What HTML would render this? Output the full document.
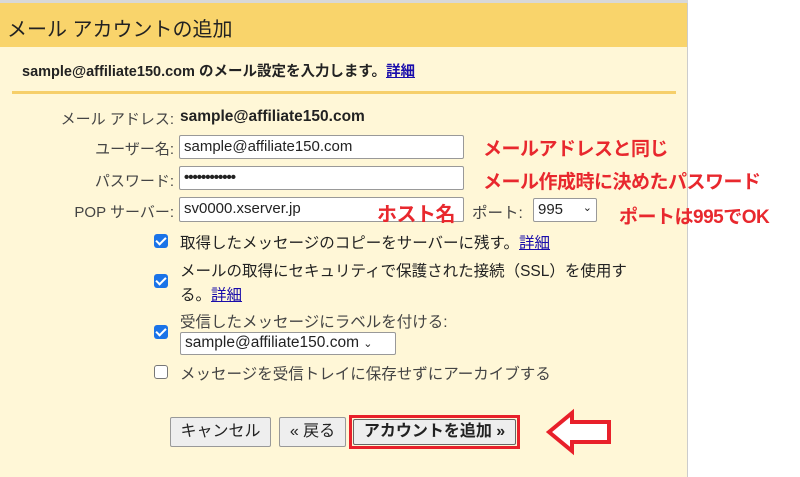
<!DOCTYPE html>
<html><head><meta charset="utf-8"><style>
body{margin:0;width:800px;height:477px;background:#fff;font-family:"Liberation Sans","Noto Sans CJK JP",sans-serif;position:relative;overflow:hidden}
.a{position:absolute}
#panel{left:0;top:0;width:687px;height:477px;background:#fff7d7;border-right:1px solid #ccc}
#top{left:0;top:0;width:688px;height:3px;background:#d8d8d8}
#hd{left:0;top:3px;width:687px;height:44px;background:#f9d46b}
#hd span{position:absolute;left:7px;top:10px;font-size:20px;color:#222}
.t{font-size:15.5px;color:#222;white-space:nowrap}
.lab{font-size:15px;color:#444;text-align:right;width:174px;left:0;white-space:nowrap}
.in{background:#fff;border:1px solid #999;border-radius:2px;height:24px;box-sizing:border-box;font-size:15px;padding:2px 4px;color:#222;white-space:nowrap}
.red{color:#e8282e;font-weight:bold;font-size:19px;white-space:nowrap;letter-spacing:-0.5px}
.cb{width:14px;height:14px;border-radius:3px;background:#1a73e8;left:154px}
.cb::after{content:"";position:absolute;left:4px;top:1px;width:4px;height:8px;border:solid #fff;border-width:0 2px 2px 0;transform:rotate(45deg)}
.cb.off{background:#fff;border:1px solid #777;box-sizing:border-box}
.cb.off::after{display:none}
a{color:#1a0dab;text-decoration:underline}
.btn{background:#eee;border:1px solid #999;border-radius:2px;height:30px;box-sizing:border-box;font-size:16px;text-align:center;line-height:28px;color:#222}
</style></head><body>
<div id="panel" class="a"></div>
<div id="top" class="a"></div>
<div id="hd" class="a"><span>メール アカウントの追加</span></div>
<div class="a t" style="left:22px;top:60px;font-weight:bold;font-size:14.5px">sample@affiliate150.com のメール設定を入力します。<a style="color:#1a0dab">詳細</a></div>
<div class="a" style="left:12px;top:91px;width:664px;height:3px;background:#f6cf6a"></div>
<div class="a lab" style="top:108px">メール アドレス:</div>
<div class="a t" style="left:180px;top:108px;font-weight:bold">sample@affiliate150.com</div>
<div class="a lab" style="top:138px">ユーザー名:</div>
<div class="a in" style="left:179px;top:135px;width:285px">sample@affiliate150.com</div>
<div class="a lab" style="top:170px">パスワード:</div>
<div class="a in" style="left:179px;top:166px;width:285px;font-weight:bold;letter-spacing:-1px">••••••••••••</div>
<div class="a lab" style="top:201px">POP サーバー:</div>
<div class="a in" style="left:179px;top:197px;width:285px;height:25px">sv0000.xserver.jp</div>
<div class="a red" style="left:377px;top:198px;font-size:20px">ホスト名</div>
<div class="a t" style="left:472px;top:201px;color:#444">ポート:</div>
<div class="a in" style="left:533px;top:198px;width:64px">995 <span style="float:right;font-size:11px">&#8964;</span></div>
<div class="a red" style="left:483px;top:134px">メールアドレスと同じ</div>
<div class="a red" style="left:483px;top:167px">メール作成時に決めたパスワード</div>
<div class="a red" style="left:619px;top:202px">ポートは995でOK</div>
<div class="a cb" style="top:234px"></div>
<div class="a t" style="left:180px;top:231px">取得したメッセージのコピーをサーバーに残す。<a>詳細</a></div>
<div class="a cb" style="top:274px"></div>
<div class="a t" style="left:180px;top:259px">メールの取得にセキュリティで保護された接続（SSL）を使用す</div>
<div class="a t" style="left:180px;top:283px">る。<a>詳細</a></div>
<div class="a cb" style="top:325px"></div>
<div class="a t" style="left:180px;top:310px;color:#444">受信したメッセージにラベルを付ける:</div>
<div class="a in" style="left:180px;top:332px;width:216px;height:23px;font-size:15.5px;padding-top:1px">sample@affiliate150.com <span style="font-size:11px">&#8964;</span></div>
<div class="a cb off" style="top:365px"></div>
<div class="a t" style="left:180px;top:362px;color:#444">メッセージを受信トレイに保存せずにアーカイブする</div>
<div class="a btn" style="left:170px;top:417px;width:101px">キャンセル</div>
<div class="a btn" style="left:279px;top:417px;width:67px">« 戻る</div>
<div class="a" style="left:349px;top:415px;width:171px;height:34px;border:3px solid #e8202a;box-sizing:border-box"></div>
<div class="a btn" style="left:353px;top:419px;width:163px;height:26px;line-height:24px;font-weight:bold;border-color:#666">アカウントを追加 »</div>
<svg class="a" style="left:545px;top:408px" width="70" height="48"><path d="M4 24 L27 5 L27 14 L64 14 L64 34 L27 34 L27 43 Z" fill="#fff" stroke="#e8202a" stroke-width="4" stroke-linejoin="miter"/></svg>
</body></html>
